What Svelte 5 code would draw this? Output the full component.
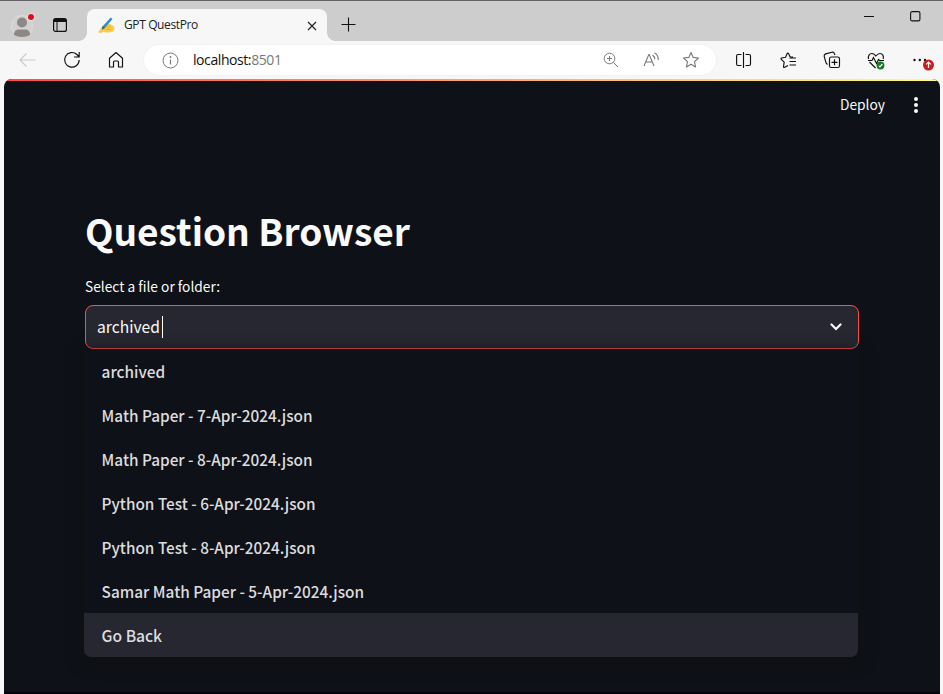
<script>
  const options = [
    { label: 'archived', width: 63.5 },
    { label: 'Math Paper - 7-Apr-2024.json', width: 211 },
    { label: 'Math Paper - 8-Apr-2024.json', width: 211 },
    { label: 'Python Test - 6-Apr-2024.json', width: 214 },
    { label: 'Python Test - 8-Apr-2024.json', width: 214 },
    { label: 'Samar Math Paper - 5-Apr-2024.json', width: 262.5 },
    { label: 'Go Back', width: 60.5 }
  ];
  let active = $state(6);
</script>

<div class="window">
  <header class="tabs">
    <svg class="profile" width="24" height="26" viewBox="0 0 24 26">
      <circle cx="11" cy="14" r="10.5" fill="#d2d0ce" stroke="#dedddb" />
      <circle cx="11" cy="10.5" r="5" fill="#8b8886" />
      <path d="M3 23c0-4 2-5.500 5-5.500h6c3 0 5 1.500 5 5.500-4.500 2.500-11.500 2.500-16 0z" fill="#8b8886" />
      <circle cx="20" cy="5" r="3.800" fill="#e8e8e8" /><circle cx="20" cy="5" r="3" fill="#e00b1c" />
    </svg>
    <svg class="workspace" width="16" height="16" viewBox="0 0 16 16">
      <rect x="1.600" y="1.600" width="12.800" height="12.800" rx="2" fill="none" stroke="#111" stroke-width="1.200" />
      <path d="M1.500 5V3.500a2 2 0 0 1 2-2h9a2 2 0 0 1 2 2V5z" fill="#111" /><path d="M5 5v9" stroke="#111" />
    </svg>
    <div class="tab">
      <svg width="17" height="17" viewBox="0 0 17 17">
        <path d="M0 14.500 5 12l2 1.500-3 2z" fill="#efb13b" />
        <path d="M.5 16c1.500-2.500 2-5 4-7l4-2.200 3.500.2 3.500 2c1.500 1.500 1.500 4-.5 5.200L11 15.500H7.500L5 14.500l-2 1.300z" fill="#ffca3d" />
        <path d="M8 10h5M8 12.500h5" stroke="#e8a126" stroke-width=".7" />
        <path d="m4 12.500.5-3L12.700.5l1.800 1.500-7.500 9z" fill="#348cc8" /><path d="m4 12.500.5-3 2.500 1.500z" fill="#455c6e" />
      </svg>
      <span class="title">GPT QuestPro</span>
      <svg class="close" width="10" height="10" viewBox="0 0 10 10"><path d="m1 1 8 8M9 1 1 9" stroke="#222" stroke-width="1.200" /></svg>
    </div>
    <svg class="plus" width="15" height="15" viewBox="0 0 15 15"><path d="M.5 7.500h14M7.500.5v14" stroke="#111" stroke-width="1.100" /></svg>
    <div class="controls">
      <svg width="10" height="10" viewBox="0 0 10 10"><path d="M0 5.500h10" stroke="#111" /></svg>
      <svg width="11" height="11" viewBox="0 0 11 11"><rect x=".6" y=".6" width="9.300" height="9.300" rx="1.500" fill="none" stroke="#111" stroke-width="1.100" /></svg>
    </div>
  </header>

  <nav>
    <svg class="back" width="17" height="14" viewBox="0 0 17 14"><path d="M16.500 7H1M7.500.5 1 7l6.500 6.500" fill="none" stroke="#c9c9c9" stroke-width="1.100" /></svg>
    <svg class="reload" width="18" height="18" viewBox="0 0 18 18"><path d="M16.200 9A7.300 7.300 0 1 1 13.900 3.500L16.200 6M16.200 1v5H11" fill="none" stroke="#111" stroke-width="1.150" /></svg>
    <svg class="home" width="16" height="18" viewBox="0 0 16 18"><path d="M1.500 7.300 8 1.500l6.500 5.800V16h-4v-5a1 1 0 0 0-1-1h-3a1 1 0 0 0-1 1v5h-4z" fill="none" stroke="#111" stroke-width="1.150" stroke-linejoin="round" /></svg>
    <div class="address">
      <svg class="info" width="17" height="17" viewBox="0 0 17 17"><circle cx="8.500" cy="8.500" r="7.500" fill="none" stroke="#777" /><path d="M8.500 7.500v5" stroke="#777" stroke-width="1.200" /><circle cx="8.500" cy="5" r=".9" fill="#777" /></svg>
      <span class="url">localhost:<span>8501</span></span>
      <svg class="zoom" width="16" height="16" viewBox="0 0 16 16" fill="none" stroke="#777"><circle cx="6.500" cy="6.500" r="5.300" /><path d="m10.500 10.500 4.500 4.500M4 6.500h5M6.500 4v5" /></svg>
      <svg class="read" width="17" height="16" viewBox="0 0 17 16" fill="none" stroke="#777" stroke-width="1.050"><path d="M1 14 5.800 2.500h.4L11 14M2.700 10h6.600M9.500 3.200c1.600.8 2.300 2.300 2.200 4M11.500 1c2.600 1.300 4 3.600 3.700 7" /></svg>
      <svg class="star" width="18" height="18" viewBox="0 0 18 18" fill="none" stroke="#777" stroke-width="1.100" stroke-linejoin="round"><path d="m9 1.500 2.200 4.900 5.300.6-4 3.600 1.100 5.400L9 13.300 4.400 16l1.100-5.400-4-3.600 5.300-.6z" /></svg>
    </div>
    <svg class="split" width="16" height="16" viewBox="0 0 16 16" fill="none" stroke="#111" stroke-width="1.150"><path d="M5.500 2.500H2A1.500 1.500 0 0 0 .6 4v8A1.500 1.500 0 0 0 2 13.500h3.500M9.500 2.500H13A1.500 1.500 0 0 1 14.500 4v8a1.500 1.500 0 0 1-1.500 1.500H9.500M7.500 0v16" /></svg>
    <svg class="favorites" width="18" height="17" viewBox="0 0 18 17" fill="none" stroke="#111" stroke-width="1.150" stroke-linejoin="round"><path d="m13 5-3-.3L8.500 1.600a.8.800 0 0 0-1.400 0L5.600 5.200 1.700 6c-.8.200-.9.800-.4 1.300l2.900 2.900-.7 4.300c-.1.900.5 1.200 1.200.8L8 13.500M16 6H9.500M16 9.500H9.500M16 13H9.500" /></svg>
    <svg class="collections" width="18" height="18" viewBox="0 0 18 18" fill="none" stroke="#111" stroke-width="1.150"><path d="M4.500 13.500C3.500 12.800 3 12 2.700 10.800L1.200 5.300c-.3-1.300.2-2 1.400-2.400L9 1.200c1.300-.3 2 .1 2.400 1.400l.5 1.400" /><rect x="6.500" y="6" width="10" height="10.500" rx="1.800" /><path d="M11.500 8.300v6M8.500 11.300h6" /></svg>
    <svg class="health" width="18" height="18" viewBox="0 0 18 18" fill="none" stroke="#111" stroke-width="1.150"><path d="M1.500 7C.7 4 2.500 1.500 4.800 1.500 7 1.500 8 3 8.800 4c.8-1 2-2.500 4.200-2.500 2.500 0 4 2.500 3.200 5.500M2.500 10l6 6M1 8.500h4l1.500-3 3 6 2-4 1 1H17" /><circle cx="13.500" cy="13.500" r="3.900" fill="#137b22" stroke="none" /><path d="m11.800 13.700 1.100 1.100 2.500-2.800" stroke="#fff" /></svg>
    <svg class="more" width="23" height="16" viewBox="0 0 23 16"><g fill="#111"><circle cx="2.500" cy="5" r="1.200" /><circle cx="7.800" cy="5" r="1.200" /><circle cx="13" cy="5" r="1.200" /></g><circle cx="16.500" cy="10" r="5.500" fill="#c9201f" /><path d="M16.500 13V7.300M14.200 9.400l2.300-2.300 2.300 2.300" fill="none" stroke="#fff" stroke-width="1.200" /></svg>
  </nav>

  <main>
    <div class="accent"></div>
    <div class="appbar">
      <svg class="fit" width="45" height="22"><text x="0" y="16" textLength="45" lengthAdjust="spacingAndGlyphs">Deploy</text></svg>
      <svg class="kebab" width="6" height="16" viewBox="0 0 6 16" fill="#fafafa"><circle cx="3" cy="2" r="2" /><circle cx="3" cy="8" r="2" /><circle cx="3" cy="14" r="2" /></svg>
    </div>
    <section>
      <h1><svg width="330" height="60"><text x="0" y="36" textLength="325" lengthAdjust="spacingAndGlyphs">Question Browser</text></svg></h1>
      <div class="label"><svg width="140" height="22"><text x="0" y="16.300" textLength="135" lengthAdjust="spacingAndGlyphs">Select a file or folder:</text></svg></div>
      <div class="select">
        <svg width="64" height="24"><text x="0" y="18" textLength="63" lengthAdjust="spacingAndGlyphs">archived</text></svg>
        <i class="caret"></i>
        <svg class="chevron" width="12" height="8" viewBox="0 0 12 8"><path d="m1.500 1.500 4.500 4.500 4.500-4.500" fill="none" stroke="#fafafa" stroke-width="2.200" stroke-linecap="round" /></svg>
      </div>
      <ul>
        {#each options as option, i}
          <li class:active={active === i} onmouseenter={() => (active = i)}>
            <svg width="280" height="24"><text x="-.4" y="18.600" textLength={option.width} lengthAdjust="spacingAndGlyphs">{option.label}</text></svg>
          </li>
        {/each}
      </ul>
    </section>
  </main>
</div>

<style>
  :global(body) { margin: 0; background: #f7f7f7; overflow: hidden; }
  * { box-sizing: border-box; }
  svg { display: block; flex: none; overflow: visible; }
  .window { height: 694px; display: flex; flex-direction: column; font-family: "Open Sans", sans-serif; background: #f7f7f7; }
  .tabs { height: 41px; flex: none; border-top: 1px solid #656365; background: #cdcdcd; display: flex; align-items: flex-start; }
  .profile { margin: 11px 0 0 11px; }
  .workspace { margin: 16px 0 0 17px; }
  .tab { width: 240px; height: 32px; margin: 8px 0 0 19px; background: #f7f7f7; border-radius: 8px 8px 0 0; display: flex; align-items: center; padding: 0 10px 0 11px; position: relative; }
  .tab::before, .tab::after { content: ""; position: absolute; bottom: 0; width: 8px; height: 8px; }
  .tab::before { right: 100%; background: radial-gradient(circle at 0 0, transparent 7.500px, #f7f7f7 8px); }
  .tab::after { left: 100%; background: radial-gradient(circle at 100% 0, transparent 7.500px, #f7f7f7 8px); }
  .title { margin-left: 9px; font-size: 12px; letter-spacing: -.38px; color: #222; line-height: 18px; }
  .close { margin: 1px 0 0 auto; }
  .plus { margin: 16px 0 0 14px; }
  .controls { margin: 10px 22px 0 auto; display: flex; gap: 36px; }
  nav { height: 38px; flex: none; display: flex; align-items: center; }
  .back { margin-left: 19px; }
  .reload { margin-left: 27px; }
  .home { margin-left: 27px; }
  .address { width: 572px; height: 30px; margin-left: 20px; border-radius: 15px; background: #fff; display: flex; align-items: center; box-shadow: 0 0 2px #e6e6e6; }
  .info { margin-left: 18px; }
  .url { margin-left: 14px; font-size: 14px; letter-spacing: -.42px; color: #111; line-height: 20px; }
  .url span { color: #777; }
  .zoom { margin-left: auto; }
  .read { margin-left: 24px; }
  .star { margin: 0 16px 0 22px; }
  .split { margin-left: 20px; }
  .favorites { margin-left: 28px; }
  .collections { margin-left: 25px; }
  .health { margin: 1px 0 0 26px; }
  .more { margin: 6px 0 0 27px; }
  main { flex: 1; margin: 0 3px 0 4px; background: #0e1117; border-radius: 8px 8px 0 0; overflow: hidden; border-bottom: 2px solid #04050b; color: #fafafa; font-family: "Noto Sans CJK SC", sans-serif; }
  .accent { height: 2px; background: linear-gradient(90deg, #ff4b4b, #fffd80); }
  .appbar { height: 48px; display: flex; align-items: center; justify-content: flex-end; padding-right: 21px; gap: 28px; }
  text { fill: #fafafa; }
  .appbar text { font-size: 14px; }
  section { margin: 81px 81px 0; }
  h1 { margin: 0; height: 60px; }
  h1 text { font-size: 37px; font-weight: 700; }
  .label { height: 35px; padding-top: 6px; }
  .label text { font-size: 14px; }
  .select { width: 774px; height: 44px; border: 1px solid #ff4b4b; border-radius: 8px; background: #262730; display: flex; align-items: center; padding-left: 11px; }
  .select text { font-size: 16px; }
  .caret { width: 1px; height: 22px; background: #fff; margin-left: 1px; }
  .chevron { margin: 0 16px 0 auto; }
  ul { list-style: none; margin: 0 0 0 -1px; width: 774px; padding: 0; border-radius: 0 0 7px 7px; overflow: hidden; background: #0e1117; box-shadow: 0 4px 17px #101111; }
  li { height: 44px; padding-left: 18px; display: flex; align-items: center; }
  li.active { background: #262730; }
  li text { font-size: 16px; fill: #dddddf; font-weight: 500; }
</style>
